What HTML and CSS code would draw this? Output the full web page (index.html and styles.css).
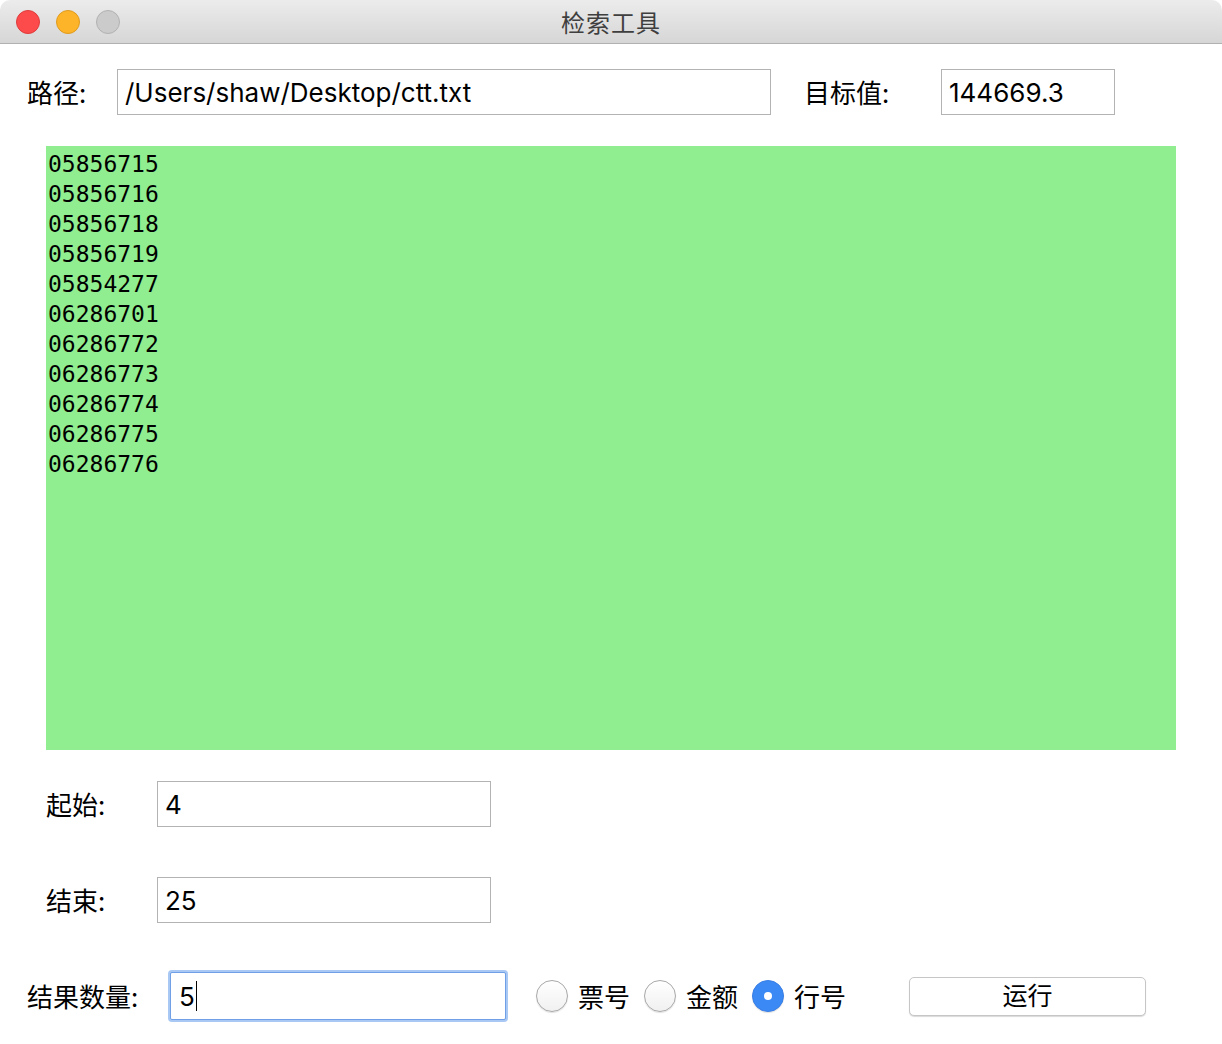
FILE: index.html
```html
<!DOCTYPE html>
<html lang="zh">
<head>
<meta charset="utf-8">
<title>检索工具</title>
<link rel="stylesheet" href="styles.css">
</head>
<body>
<div class="window">
  <div class="titlebar">
    <div class="lights">
      <span class="light red"></span>
      <span class="light yellow"></span>
      <span class="light gray"></span>
    </div>
    <div class="title">检索工具</div>
  </div>

  <div class="row row-path">
    <span class="label label-path">路径:</span>
    <div class="field field-path">/Users/shaw/Desktop/ctt.txt</div>
    <span class="label label-target">目标值:</span>
    <div class="field field-target">144669.3</div>
  </div>

  <div class="output">05856715
05856716
05856718
05856719
05854277
06286701
06286772
06286773
06286774
06286775
06286776</div>

  <div class="row row-start">
    <span class="label label-short">起始:</span>
    <div class="field field-mid">4</div>
  </div>

  <div class="row row-end">
    <span class="label label-short">结束:</span>
    <div class="field field-mid">25</div>
  </div>

  <div class="row row-bottom">
    <span class="label label-count">结果数量:</span>
    <div class="field field-count focused">5<span class="caret"></span></div>
    <div class="radios">
      <span class="option"><span class="radio"></span><span class="radio-label">票号</span></span>
      <span class="option"><span class="radio"></span><span class="radio-label">金额</span></span>
      <span class="option"><span class="radio checked"></span><span class="radio-label">行号</span></span>
    </div>
    <button class="run">运行</button>
  </div>
</div>
</body>
</html>
```

FILE: styles.css
```css
html, body {
  margin: 0;
  padding: 0;
  background: #ffffff;
}
body {
  font-family: "Inter", "Noto Sans CJK SC", sans-serif;
  color: #111;
}
.window {
  width: 1222px;
  height: 1044px;
  background: #ffffff;
  display: flex;
  flex-direction: column;
  overflow: hidden;
}
.titlebar {
  height: 43px;
  flex: none;
  background: linear-gradient(#ececec, #d6d6d6);
  border-bottom: 1px solid #b1b1b1;
  border-radius: 10px 10px 0 0;
  display: flex;
  align-items: center;
  justify-content: center;
  position: relative;
}
.lights {
  position: absolute;
  left: 16px;
  top: 10px;
  display: flex;
  gap: 16px;
}
.light {
  width: 24px;
  height: 24px;
  border-radius: 50%;
  box-sizing: border-box;
}
.red { background: #fc4b4a; border: 1px solid #df3b3b; }
.yellow { background: #fdb428; border: 1px solid #df9b1e; }
.gray { background: #cbcbcb; border: 1px solid #b2b2b2; }
.title {
  font-family: "Noto Sans CJK SC", sans-serif;
  font-size: 24px;
  color: #3f3f3f;
  letter-spacing: 1px;
}
.row {
  display: flex;
  align-items: center;
  flex: none;
}
.label {
  font-family: "Noto Sans CJK SC", sans-serif;
  font-size: 26px;
  color: #000;
  white-space: nowrap;
  margin-top: -2px;
}
.field {
  box-sizing: border-box;
  height: 46px;
  border: 1px solid #b3b3b3;
  background: #fff;
  font-family: "Inter", "Noto Sans CJK SC", sans-serif;
  font-size: 26px;
  color: #000;
  display: flex;
  align-items: center;
  padding-left: 7px;
  white-space: nowrap;
}
.row-path {
  margin-top: 25px;
  padding-left: 27px;
}
.label-path { width: 90px; }
.field-path { width: 654px; }
.label-target { width: 137px; margin-left: 33px; }
.field-target { width: 174px; }

.output {
  margin: 31px 0 0 46px;
  width: 1130px;
  height: 604px;
  flex: none;
  box-sizing: border-box;
  background: #90ee90;
  padding: 3px 0 0 2px;
  font-family: "DejaVu Sans Mono", monospace;
  font-size: 23px;
  line-height: 30px;
  white-space: pre;
  color: #000;
}
.row-start {
  margin-top: 31px;
  padding-left: 46px;
}
.row-end {
  margin-top: 50px;
  padding-left: 46px;
}
.label-short { width: 111px; }
.field-mid { width: 334px; }

.row-bottom {
  margin-top: 49px;
  padding-left: 27px;
}
.label-count { width: 143px; }
.field-count {
  width: 336px;
  height: 48px;
  border: 1px solid #6f9fe6;
  box-shadow: 0 0 0 2px #a9c8f4;
  border-radius: 2px;
  padding-left: 8px;
}
.caret {
  display: inline-block;
  width: 1px;
  height: 30px;
  background: #000;
  margin-left: 1px;
}
.radios {
  display: flex;
  align-items: center;
  gap: 14px;
  margin-left: 30px;
}
.option {
  display: flex;
  align-items: center;
}
.radio {
  box-sizing: border-box;
  width: 32px;
  height: 32px;
  border-radius: 50%;
  border: 1px solid #a8a8a8;
  background: linear-gradient(#ffffff, #f0f0f0);
  box-shadow: 0 1px 1px rgba(0,0,0,0.12);
  flex: none;
  position: relative;
}
.radio.checked {
  background: #3a89f4;
  border-color: #3a7fe6;
}
.radio.checked::after {
  content: "";
  position: absolute;
  left: 11px;
  top: 11px;
  width: 8px;
  height: 8px;
  border-radius: 50%;
  background: #fff;
}
.radio-label {
  font-family: "Noto Sans CJK SC", sans-serif;
  font-size: 26px;
  color: #000;
  margin-left: 10px;
  margin-top: -2px;
  width: 52px;
  white-space: nowrap;
}
.run {
  margin-left: 63px;
  width: 237px;
  height: 39px;
  box-sizing: border-box;
  border: 1px solid #c6c6c6;
  border-radius: 5px;
  background: #fff;
  box-shadow: 0 1px 1px rgba(0,0,0,0.15);
  font-family: "Noto Sans CJK SC", sans-serif;
  font-size: 25px;
  color: #000;
  padding: 0 0 3px;
  line-height: 1;
  display: flex;
  align-items: center;
  justify-content: center;
}
```
